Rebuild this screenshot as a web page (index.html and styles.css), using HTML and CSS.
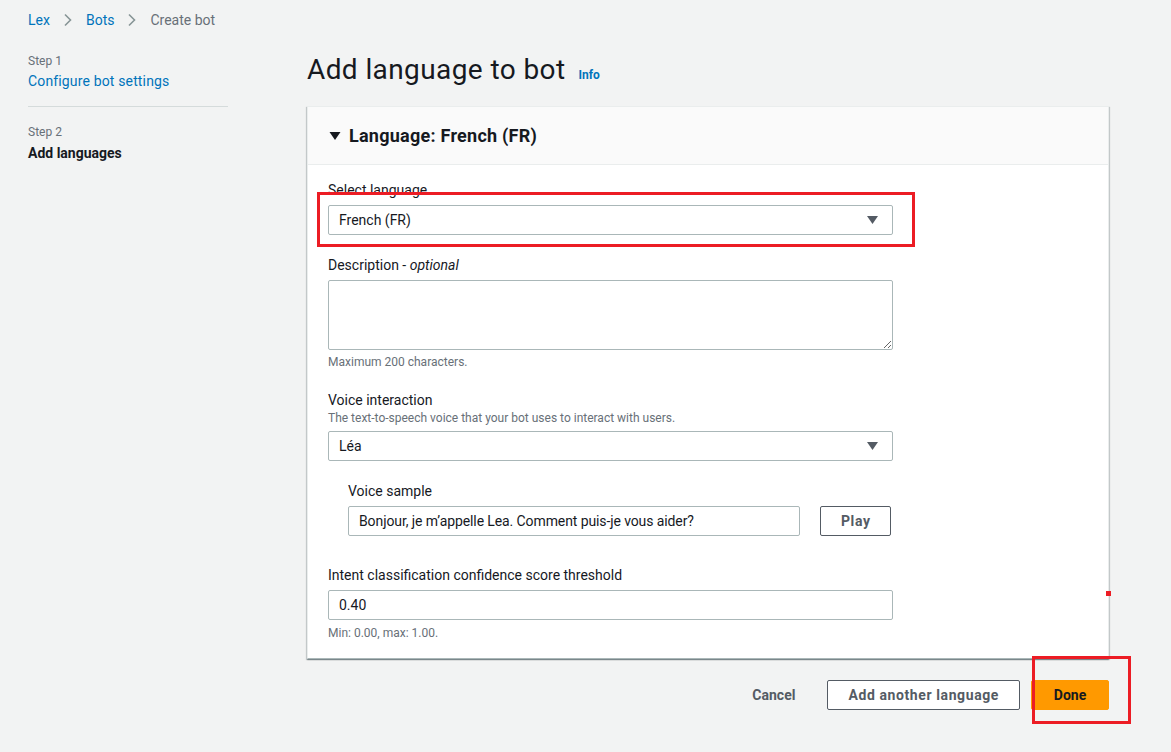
FILE: index.html
```html
<!DOCTYPE html>
<html>
<head>
<meta charset="utf-8">
<link rel="stylesheet" href="styles.css">
</head>
<body>
<div class="page">
  <nav class="crumbs">
    <a class="crumb-link">Lex</a>
    <svg class="chev" width="10" height="14" viewBox="0 0 10 14"><path d="M2 1.5 L7.5 7 L2 12.5" fill="none" stroke="#879596" stroke-width="1.6"/></svg>
    <a class="crumb-link">Bots</a>
    <svg class="chev" width="10" height="14" viewBox="0 0 10 14"><path d="M2 1.5 L7.5 7 L2 12.5" fill="none" stroke="#879596" stroke-width="1.6"/></svg>
    <span class="crumb-current">Create bot</span>
  </nav>
  <div class="layout">
    <aside class="steps">
      <div class="step-num">Step 1</div>
      <a class="step-link">Configure bot settings</a>
      <div class="step-divider"></div>
      <div class="step-num step2">Step 2</div>
      <div class="step-current">Add languages</div>
    </aside>
    <main class="main">
      <h1 class="title"><span class="title-text">Add language to bot</span> <a class="info">Info</a></h1>
      <section class="panel">
        <header class="panel-head">
          <svg class="tri" width="12" height="10" viewBox="0 0 12 10"><path d="M0.5 1 H11.5 L6 9 Z" fill="#16191f"/></svg>
          <h2 class="panel-title">Language: French (FR)</h2>
        </header>
        <div class="panel-body">
          <div class="field">
            <label class="label">Select language</label>
            <div class="select"><span>French (FR)</span><svg class="caret" width="11" height="8" viewBox="0 0 11 8"><path d="M0 0 H11 L5.5 8 Z" fill="#545b64"/></svg></div>
          </div>
          <div class="field">
            <label class="label">Description - <i>optional</i></label>
            <textarea class="textarea"></textarea>
            <div class="hint">Maximum 200 characters.</div>
          </div>
          <div class="field">
            <label class="label">Voice interaction</label>
            <div class="desc">The text-to-speech voice that your bot uses to interact with users.</div>
            <div class="select"><span>Léa</span><svg class="caret" width="11" height="8" viewBox="0 0 11 8"><path d="M0 0 H11 L5.5 8 Z" fill="#545b64"/></svg></div>
          </div>
          <div class="sample">
            <label class="label">Voice sample</label>
            <div class="sample-row">
              <div class="input sample-input">Bonjour, je m’appelle Lea. Comment puis-je vous aider?</div>
              <button class="btn btn-normal play">Play</button>
            </div>
          </div>
          <div class="field threshold">
            <label class="label">Intent classification confidence score threshold</label>
            <div class="input">0.40</div>
            <div class="hint">Min: 0.00, max: 1.00.</div>
          </div>
        </div>
      </section>
      <div class="actions">
        <button class="btn btn-link">Cancel</button>
        <button class="btn btn-normal">Add another language</button>
        <button class="btn btn-primary">Done</button>
      </div>
    </main>
  </div>
  <div class="mark mark-select"></div>
  <div class="mark mark-done"></div>
  <div class="mark-dot"></div>
</div>
</body>
</html>
```

FILE: styles.css
```css
* { box-sizing: border-box; }
html, body { margin: 0; padding: 0; }
body {
  background: #f2f3f3;
  font-family: "Roboto", "Liberation Sans", sans-serif;
  font-size: 14px;
  color: #16191f;
  width: 1171px;
  height: 752px;
  overflow: hidden;
}
.page { position: relative; height: 752px; }

.crumbs {
  display: flex;
  align-items: center;
  padding-left: 28px;
  height: 40px;
  line-height: 20px;
}
.crumb-link { color: #0073bb; }
.chev { margin: 0 13px 0 13px; }
.crumb-current { color: #687078; }

.layout { display: flex; }
.steps { width: 200px; margin-left: 28px; padding-top: 13px; }
.step-num { font-size: 12px; line-height: 16px; color: #687078; }
.step-link { display: block; margin-top: 2px; color: #0073bb; line-height: 20px; letter-spacing: 0.15px; }
.step-divider { height: 1px; background: #d5dbdb; margin-top: 15px; }
.step2 { margin-top: 17px; }
.step-current { margin-top: 3px; font-weight: 700; line-height: 20px; }

.main { margin-left: 79px; width: 802px; padding-top: 12px; }
.title {
  margin: 0;
  display: flex;
  align-items: baseline;
  height: 36px;
  font-size: 28px;
  font-weight: 400;
  line-height: 36px;
  color: #16191f;
}
.title-text { letter-spacing: 0.4px; }
.info {
  font-size: 12px;
  font-weight: 700;
  line-height: 16px;
  color: #0073bb;
  margin-left: 13px;
}

.panel {
  margin-top: 18px;
  background: #fff;
  border: 1px solid #eaeded;
  border-bottom: 1px solid #aab7b8;
  box-shadow: 0 1px 1px rgba(0,28,36,.3), 1px 1px 1px rgba(0,28,36,.15), -1px 1px 1px rgba(0,28,36,.15);
}
.panel-head {
  display: flex;
  align-items: center;
  height: 58px;
  padding-left: 21px;
  background: #fafafa;
  border-bottom: 1px solid #eaeded;
}
.tri { margin-right: 8px; }
.panel-title { margin: 0; font-size: 18px; font-weight: 700; line-height: 24px; letter-spacing: 0.25px; }

.panel-body { padding: 15px 20px 17px 20px; }
.field + .field, .field + .sample { margin-top: 20px; }
.label { display: block; line-height: 20px; margin-bottom: 5px; color: #16191f; }
.desc { font-size: 12px; line-height: 16px; color: #687078; margin-top: -5px; margin-bottom: 5px; }
.select, .input {
  width: 565px;
  height: 30px;
  border: 1px solid #aab7b8;
  border-radius: 2px;
  background: #fff;
  display: flex;
  align-items: center;
  padding: 0 10px;
  justify-content: space-between;
}
.caret { margin-right: 4px; }
.textarea {
  display: block;
  width: 565px;
  height: 70px;
  border: 1px solid #aab7b8;
  border-radius: 2px;
  font: inherit;
  margin: 0;
}
.hint { font-size: 12px; line-height: 16px; color: #687078; margin-top: 4px; }

.sample { padding-left: 20px; }
.sample-row { display: flex; align-items: center; }
.sample-input { width: 452px; letter-spacing: -0.1px; }
.play { margin-left: 20px; width: 71px; }
.threshold { margin-top: 29px !important; }
.threshold .hint { margin-top: 5px; }

.actions {
  display: flex;
  justify-content: flex-end;
  align-items: center;
  margin-top: 21px;
  gap: 11px;
}
.btn {
  height: 30px;
  font-family: inherit;
  font-size: 14px;
  font-weight: 700;
  border-radius: 2px;
  padding: 0 20px;
  cursor: pointer;
}
.btn-normal { background: #fff; border: 1px solid #545b64; color: #545b64; letter-spacing: 0.6px; }
.btn-link { background: transparent; border: 1px solid transparent; color: #545b64; }
.btn-primary { background: #ff9900; border: 1px solid #ff9900; color: #16191f; width: 78px; }

.mark {
  position: absolute;
  border: 3px solid #ec1c24;
}
.mark-select { left: 317px; top: 192px; width: 598px; height: 55px; }
.mark-done { left: 1032px; top: 656px; width: 99px; height: 68px; }
.mark-dot { position: absolute; left: 1106px; top: 591px; width: 5px; height: 5px; background: #ec1c24; }
```
